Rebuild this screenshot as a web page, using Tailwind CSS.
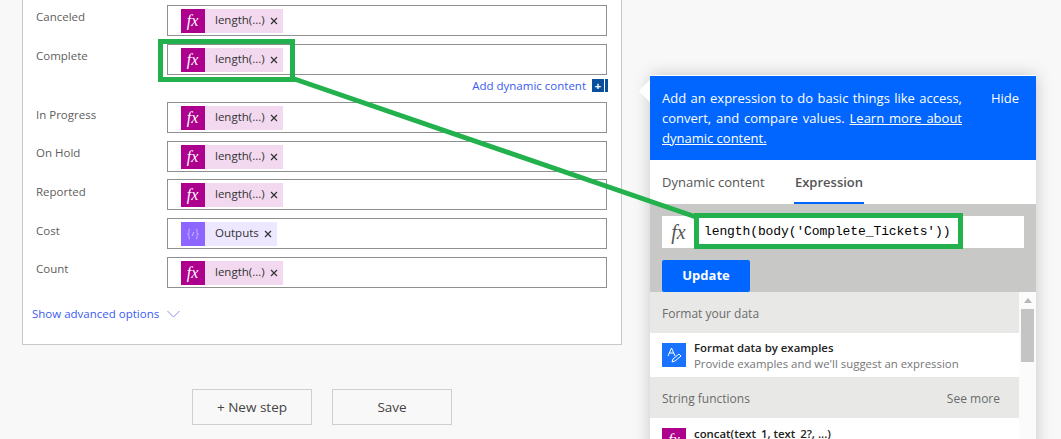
<!DOCTYPE html>
<html>
<head>
<meta charset="utf-8">
<script src="https://cdn.jsdelivr.net/npm/@tailwindcss/browser@4"></script>
</head>
<body class="bg-[#f8f8f8]">
<div class="relative flex h-[439px] w-[1061px] overflow-hidden bg-[#f8f8f8] font-['Open_Sans',sans-serif] text-[11.5px] text-[#444]">
  <!-- left column -->
  <div class="ml-[22px] w-[600px] shrink-0">
    <div class="h-[345px] border-x border-b border-[#c8c8c8] bg-white pl-[13px] pt-[5px]">
      <div class="mb-[8px] flex"><div class="w-[131px] pt-[3px] text-[#605e5c]">Canceled</div><div class="flex h-[31px] w-[440px] items-center border border-[#8f8f8f] pl-[13px]"><div class="flex h-6 w-[102px] items-center bg-[#f2d9ef]"><div class="flex h-6 w-6 items-center justify-center bg-[#ad008c] pr-[1px] font-['Liberation_Serif',serif] text-[16px] italic text-white">fx</div><span class="ml-[10px] pb-[1px] text-[#333]">length(...)</span><svg class="ml-[5px]" width="8" height="8" viewBox="0 0 8 8"><path d="M1 1l6 6M7 1l-6 6" stroke="#333" stroke-width="1.2"/></svg></div></div></div>
      <div class="flex"><div class="w-[131px] pt-[3px] text-[#605e5c]">Complete</div><div class="flex h-[31px] w-[440px] items-center border border-[#8f8f8f] pl-[13px]"><div class="flex h-6 w-[102px] items-center bg-[#f2d9ef]"><div class="flex h-6 w-6 items-center justify-center bg-[#ad008c] pr-[1px] font-['Liberation_Serif',serif] text-[16px] italic text-white">fx</div><span class="ml-[10px] pb-[1px] text-[#333]">length(...)</span><svg class="ml-[5px]" width="8" height="8" viewBox="0 0 8 8"><path d="M1 1l6 6M7 1l-6 6" stroke="#333" stroke-width="1.2"/></svg></div></div></div>
      <div class="flex h-[27px] w-[572px] items-start justify-end pt-[4px]">
        <span class="leading-[14px] text-[#3b5cf0]">Add dynamic content</span>
        <div class="ml-[6px] flex h-[13px] w-[12px] items-center justify-center bg-[#0a4f9e] text-[11px] font-bold leading-none text-white">+</div>
        <div class="ml-[1px] h-[13px] w-[3px] bg-[#0a4f9e]"></div>
      </div>
      <div class="mb-[8px] flex"><div class="w-[131px] pt-[4px] text-[#605e5c]">In Progress</div><div class="flex h-[31px] w-[440px] items-center border border-[#8f8f8f] pl-[13px]"><div class="flex h-6 w-[102px] items-center bg-[#f2d9ef]"><div class="flex h-6 w-6 items-center justify-center bg-[#ad008c] pr-[1px] font-['Liberation_Serif',serif] text-[16px] italic text-white">fx</div><span class="ml-[10px] pb-[1px] text-[#333]">length(...)</span><svg class="ml-[5px]" width="8" height="8" viewBox="0 0 8 8"><path d="M1 1l6 6M7 1l-6 6" stroke="#333" stroke-width="1.2"/></svg></div></div></div>
      <div class="mb-[7px] flex"><div class="w-[131px] pt-[3px] text-[#605e5c]">On Hold</div><div class="flex h-[31px] w-[440px] items-center border border-[#8f8f8f] pl-[13px]"><div class="flex h-6 w-[102px] items-center bg-[#f2d9ef]"><div class="flex h-6 w-6 items-center justify-center bg-[#ad008c] pr-[1px] font-['Liberation_Serif',serif] text-[16px] italic text-white">fx</div><span class="ml-[10px] pb-[1px] text-[#333]">length(...)</span><svg class="ml-[5px]" width="8" height="8" viewBox="0 0 8 8"><path d="M1 1l6 6M7 1l-6 6" stroke="#333" stroke-width="1.2"/></svg></div></div></div>
      <div class="mb-[8px] flex"><div class="w-[131px] pt-[4px] text-[#605e5c]">Reported</div><div class="flex h-[31px] w-[440px] items-center border border-[#8f8f8f] pl-[13px]"><div class="flex h-6 w-[102px] items-center bg-[#f2d9ef]"><div class="flex h-6 w-6 items-center justify-center bg-[#ad008c] pr-[1px] font-['Liberation_Serif',serif] text-[16px] italic text-white">fx</div><span class="ml-[10px] pb-[1px] text-[#333]">length(...)</span><svg class="ml-[5px]" width="8" height="8" viewBox="0 0 8 8"><path d="M1 1l6 6M7 1l-6 6" stroke="#333" stroke-width="1.2"/></svg></div></div></div>
      <div class="mb-[8px] flex"><div class="w-[131px] pt-[4px] text-[#605e5c]">Cost</div><div class="flex h-[31px] w-[440px] items-center border border-[#8f8f8f] pl-[13px]"><div class="flex h-6 w-[96px] items-center bg-[#ede8ff]"><div class="flex h-6 w-6 items-center justify-center bg-[#8c66ff]"><svg width="14" height="12" viewBox="0 0 14 12" fill="none" stroke="#cdbdff" stroke-width="1"><path d="M4 1C2.500 1 3 3 3 4.500S2 6 1.500 6 3 6.500 3 7.500 2.500 11 4 11M10 1c1.500 0 1 2 1 3.500s1 1.500 1.500 1.500S11 6.500 11 7.500 11.500 11 10 11M8 4L6 8"/></svg></div><span class="ml-[10px] pb-[1px] text-[#333]">Outputs</span><svg class="ml-[5px]" width="8" height="8" viewBox="0 0 8 8"><path d="M1 1l6 6M7 1l-6 6" stroke="#333" stroke-width="1.2"/></svg></div></div></div>
      <div class="flex"><div class="w-[131px] pt-[3px] text-[#605e5c]">Count</div><div class="flex h-[31px] w-[440px] items-center border border-[#8f8f8f] pl-[13px]"><div class="flex h-6 w-[102px] items-center bg-[#f2d9ef]"><div class="flex h-6 w-6 items-center justify-center bg-[#ad008c] pr-[1px] font-['Liberation_Serif',serif] text-[16px] italic text-white">fx</div><span class="ml-[10px] pb-[1px] text-[#333]">length(...)</span><svg class="ml-[5px]" width="8" height="8" viewBox="0 0 8 8"><path d="M1 1l6 6M7 1l-6 6" stroke="#333" stroke-width="1.2"/></svg></div></div></div>
      <div class="-ml-[4px] mt-[17px] flex items-center text-[#3b5cf0]">
        <span>Show advanced options</span>
        <svg class="ml-[8px]" width="13" height="8" viewBox="0 0 13 8" fill="none" stroke="#8a8cf0" stroke-width="1"><path d="M.5 1l6 6 6-6"/></svg>
      </div>
    </div>
    <div class="mt-[44px] flex justify-center gap-5 text-[13.5px] text-[#444]">
      <div class="flex h-[36px] w-[120px] items-center justify-center border border-[#cfcfcf]">+ New step</div>
      <div class="flex h-[36px] w-[120px] items-center justify-center border border-[#cfcfcf]">Save</div>
    </div>
  </div>

  <!-- right panel -->
  <div class="relative ml-[28px] mt-[75px] h-[400px] w-[386px] shrink-0 border-t border-white bg-white shadow-[0_0_16px_rgba(0,0,0,0.2)]">
    <div class="absolute -left-[8px] top-[7px] h-[16px] w-[16px] rotate-45 bg-white"></div>
    <div class="relative flex h-[84px] bg-[#0066ff] pl-[12px] pt-[12px] text-[13px] leading-[20px] text-white">
      <p class="w-[300px] text-justify">Add an expression to do basic things like access, convert, and compare values. <span class="underline">Learn more about dynamic content.</span></p>
      <span class="ml-[29px]">Hide</span>
    </div>
    <div class="flex h-[44px] gap-[28px] pl-[12px] text-[13px]">
      <div class="w-[104px] whitespace-nowrap pt-[13px] text-[#555]">Dynamic content</div>
      <div class="w-[70px] whitespace-nowrap border-b-2 border-[#0066ff] pt-[13px] text-center font-semibold text-[#555]">Expression</div>
    </div>
    <div class="h-[88px] bg-[#c8c9c7] px-[12px] pt-[12px]">
      <div class="flex h-[32px] items-center bg-white">
        <span class="w-[32px] pl-[1px] text-center font-['Liberation_Serif',serif] text-[20px] italic text-[#555]">fx</span>
        <span class="ml-[10px] font-['Liberation_Mono',monospace] text-[13px] tracking-[-0.1px] text-black">length(body('Complete_Tickets'))</span>
      </div>
      <div class="mt-[12px] flex h-[32px] w-[88px] items-center justify-center rounded-[2px] bg-[#0066ff] text-[13px] font-bold text-white">Update</div>
    </div>
    <div class="flex">
      <div class="w-[369px] shrink-0">
        <div class="flex h-[41px] items-center bg-[#e8e9e7] px-[12px] pt-[2px] text-[12px] text-[#6b6b6b]">Format your data</div>
        <div class="flex h-[44px] items-center bg-white pl-[12px]">
          <div class="flex h-6 w-6 items-center justify-center bg-[#1a73ff]">
            <svg width="18" height="18" viewBox="0 0 18 18" fill="none" stroke="#fff" stroke-width="1"><path d="M3 10L6.500 2 10 10M4.500 7h4"/><path d="M7 16l1-3 6-5 2 2-6 5z"/></svg>
          </div>
          <div class="ml-[8px] pt-[1px] text-[11.4px] leading-[16px]">
            <div class="font-semibold text-[#222]">Format data by examples</div>
            <div class="text-[#767676]">Provide examples and we'll suggest an expression</div>
          </div>
        </div>
        <div class="flex h-[41px] items-center justify-between bg-[#e8e9e7] pl-[12px] pr-[19px] pt-[2px] text-[12px] text-[#6b6b6b]"><span>String functions</span><span>See more</span></div>
        <div class="flex h-[44px] items-start bg-white pl-[12px] pt-[10px]">
          <div class="flex h-6 w-6 items-center justify-center bg-[#ad008c] font-['Liberation_Serif',serif] text-[16px] italic text-white">fx</div>
          <div class="ml-[8px] -mt-[3px] text-[11.4px] font-semibold text-[#222]">concat(text_1, text_2?, ...)</div>
        </div>
      </div>
      <div class="flex w-[17px] flex-col items-center bg-[#fbfbfb] pt-[6px]">
        <svg width="8" height="5" viewBox="0 0 8 5"><path d="M0 5l4-5 4 5z" fill="#b8b8b8"/></svg>
        <div class="mt-[6px] h-[53px] w-[13px] bg-[#c4c4c4]"></div>
      </div>
    </div>
  </div>

  <!-- annotation -->
  <svg class="pointer-events-none absolute inset-0" width="1061" height="439" viewBox="0 0 1061 439" fill="none" stroke="#22b14c">
    <rect x="160.500" y="41.500" width="132" height="38" stroke-width="5"/>
    <rect x="696.500" y="215.500" width="264" height="31" stroke-width="5"/>
    <path d="M293 78.500L696 217" stroke-width="5"/>
  </svg>
</div>
</body>
</html>
